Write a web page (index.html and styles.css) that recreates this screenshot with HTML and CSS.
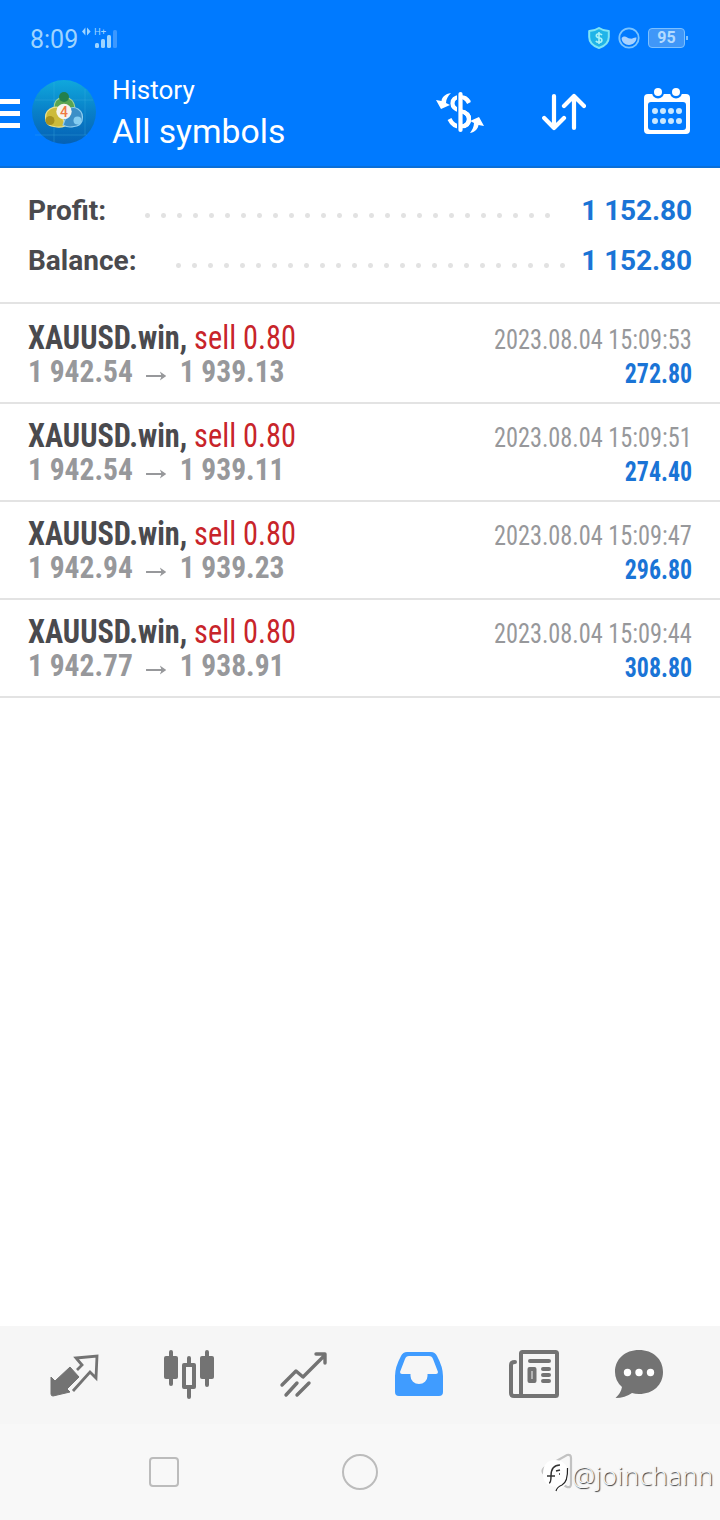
FILE: index.html
```html
<!DOCTYPE html>
<html lang="en">

<head>
    <meta charset="UTF-8">
    <meta name="viewport" content="width=device-width, initial-scale=1.0">
    <title>History</title>
    <link rel="stylesheet" href="styles.css">
</head>

<body>
    <div class="screen">
        <header class="header">
            <div class="status">
                <span class="clock">8:09</span>
                <svg class="signal" width="36" height="24" viewBox="0 0 36 24" fill="#9fd4ff">
                    <path d="M0 5.500L3.400 1.500V9.500zM8.600 5.500L5 1.500V9.500z"/>
                    <text x="12" y="9" font-size="9.500">H+</text>
                    <rect x="13" y="17" width="4" height="5" rx="1.500"/>
                    <rect x="19" y="13" width="4" height="9" rx="1.500"/>
                    <rect x="25" y="9" width="4" height="13" rx="1.500"/>
                    <rect x="31" y="4" width="4" height="18" rx="1.500" fill="#3c98ff"/>
                </svg>
                <div class="status-right">
                    <svg width="22" height="22" viewBox="0 0 22 22">
                        <path d="M11 1C8 3 5 4 1.200 4V10C1.200 15 5 19 11 21C17 19 20.800 15 20.800 10V4C17 4 14 3 11 1z" fill="#20b4e8" stroke="#7fe4f4" stroke-width="2" stroke-linejoin="round"/>
                        <path d="M14 8Q13 6.700 11 6.700Q8.300 6.700 8.300 8.700Q8.300 10.300 11 10.800Q13.900 11.300 13.900 13.200Q13.900 15.300 11 15.300Q8.700 15.300 7.900 13.800M11 5V17" fill="none" stroke="#a9f2f8" stroke-width="1.600"/>
                    </svg>
                    <svg width="22" height="22" viewBox="0 0 22 22">
                        <circle cx="11" cy="11" r="9.700" fill="none" stroke="#7ac4ff" stroke-width="1.800"/>
                        <path d="M3.600 11C7 7.500 9 11 12 11.600C15 12.200 16 10 18.500 10.600C18.500 15 15 18 11 18C7 18 3.600 15 3.600 11z" fill="#a8d2ff"/>
                    </svg>
                    <div class="battery">95</div>
                </div>
            </div>
            <div class="toolbar">
                <div class="menu"><i></i><i></i><i></i></div>
                <svg class="logo" width="64" height="64" viewBox="0 0 64 64">
                    <defs>
                        <linearGradient id="sky" x1="0" y1="0" x2="0" y2="1">
                            <stop offset="0" stop-color="#10a8dc"/>
                            <stop offset=".5" stop-color="#087fc8"/>
                            <stop offset="1" stop-color="#0561b4"/>
                        </linearGradient>
                    </defs>
                    <circle cx="32" cy="32" r="32" fill="url(#sky)"/>
                    <path d="M22 2V62M53 9V55M3 20H61M3 55H55" stroke="#43b6e4" stroke-opacity=".3"/>
                    <g stroke-width="1.200">
                        <path d="M22 28Q22 18 32 17Q42 18 43 28Q43 34 36 36H27Q22 34 22 28z" fill="#59a552" stroke="#a5d49a"/>
                        <path d="M14 41Q12 33 18 29Q23 26 28 28L33 46Q28 48 22 46.500Q16 46 14 41z" fill="#cdbb3b" stroke="#ebe08c"/>
                        <path d="M50 41Q52 33 46 29Q41 26 37 29L31 45Q36 48 42 46.500Q48 46 50 41z" fill="#3c8fc7" stroke="#8fcdef"/>
                    </g>
                    <circle cx="32" cy="17" r="5" fill="#23804c"/>
                    <circle cx="18" cy="40.500" r="4.500" fill="#a69120"/>
                    <circle cx="45.500" cy="40.500" r="4" fill="#85cdf1"/>
                    <circle cx="32" cy="31.500" r="7.700" fill="#f5f4ee"/>
                    <text x="32" y="36.500" text-anchor="middle" font-size="14" font-weight="500" fill="#ee7a42">4</text>
                </svg>
                <div class="titles">
                    <div class="title">History</div>
                    <div class="subtitle">All symbols</div>
                </div>
                <div class="actions">
                    <svg class="swap" width="50" height="44" viewBox="0 0 50 44" fill="none" stroke="#fff">
                        <path d="M33 12Q30 7 24.500 7Q16.500 7 16.500 13.500Q16.500 18.500 24.500 21Q33 23 33 29Q33 36.500 24.500 36.500Q17 36.500 13.500 29" stroke-width="4.200"/>
                        <path d="M24.500 1V43" stroke="#007aff" stroke-width="7"/>
                        <path d="M24.500 4V40" stroke-width="4.200" stroke-linecap="round"/>
                        <path d="M24.500 7Q30 7 33 13M24.500 21Q33 23 33 29Q33 36.500 24.500 36.500" stroke-width="4.200"/>
                        <path d="M15 3C9 4 6 7 5.500 11L0 10L5 19L14 15L10 13C10 9 12 6 15 3z" fill="#fff" stroke="none"/>
                        <path d="M34 43C40 42 42 38 42.500 35L48 36L43 27L34 31L38 33C38 37 36 40 34 43z" fill="#fff" stroke="none"/>
                    </svg>
                    <svg width="44" height="38" viewBox="0 0 44 38" fill="none" stroke="#fff" stroke-width="4.200" stroke-linecap="round" stroke-linejoin="round">
                        <path d="M12 3V35M2.200 25L12 35L22 25M32 35V3M22 13L32 3L42 13"/>
                    </svg>
                    <svg class="calendar" width="46" height="46" viewBox="0 0 46 46" fill="#fff">
                        <path fill-rule="evenodd" d="M4 6H42Q46 6 46 10V42Q46 46 42 46H4Q0 46 0 42V10Q0 6 4 6zM7 14Q4 14 4 17V39Q4 42 7 42H39Q42 42 42 39V17Q42 14 39 14z"/>
                        <circle cx="14" cy="4.500" r="6" fill="#007aff"/>
                        <circle cx="32" cy="4.500" r="6" fill="#007aff"/>
                        <circle cx="14" cy="4" r="4"/>
                        <circle cx="32" cy="4" r="4"/>
                        <path d="M11 23H11M19 23H19M27 23H27M35 23H35M11 33H11M19 33H19M27 33H27M35 33H35" stroke="#c9e8ff" stroke-width="6" stroke-linecap="round"/>
                    </svg>
                </div>
            </div>
        </header>

        <section class="summary">
            <div class="sum-row">
                <span class="label profit">Profit:</span>
                <span class="dots profit-dots"></span>
                <span class="total">1 152.80</span>
            </div>
            <div class="sum-row">
                <span class="label balance">Balance:</span>
                <span class="dots"></span>
                <span class="total">1 152.80</span>
            </div>
        </section>

        <main class="deals">
            <div class="deal">
                <div class="line"><span class="symbol"><b>XAUUSD.win,</b> <span class="sell">sell 0.80</span></span><span class="time">2023.08.04 15:09:53</span></div>
                <div class="line"><span class="price">1 942.54 <svg class="arrow" viewBox="0 0 22 12"><path d="M0 6H18"/><path d="M15 1.500L22 6L15 10.500L17 6z" class="tip"/></svg> 1 939.13</span><span class="amount">272.80</span></div>
            </div>
            <div class="deal">
                <div class="line"><span class="symbol"><b>XAUUSD.win,</b> <span class="sell">sell 0.80</span></span><span class="time">2023.08.04 15:09:51</span></div>
                <div class="line"><span class="price">1 942.54 <svg class="arrow" viewBox="0 0 22 12"><path d="M0 6H18"/><path d="M15 1.500L22 6L15 10.500L17 6z" class="tip"/></svg> 1 939.11</span><span class="amount">274.40</span></div>
            </div>
            <div class="deal">
                <div class="line"><span class="symbol"><b>XAUUSD.win,</b> <span class="sell">sell 0.80</span></span><span class="time">2023.08.04 15:09:47</span></div>
                <div class="line"><span class="price">1 942.94 <svg class="arrow" viewBox="0 0 22 12"><path d="M0 6H18"/><path d="M15 1.500L22 6L15 10.500L17 6z" class="tip"/></svg> 1 939.23</span><span class="amount">296.80</span></div>
            </div>
            <div class="deal">
                <div class="line"><span class="symbol"><b>XAUUSD.win,</b> <span class="sell">sell 0.80</span></span><span class="time">2023.08.04 15:09:44</span></div>
                <div class="line"><span class="price">1 942.77 <svg class="arrow" viewBox="0 0 22 12"><path d="M0 6H18"/><path d="M15 1.500L22 6L15 10.500L17 6z" class="tip"/></svg> 1 938.91</span><span class="amount">308.80</span></div>
            </div>
        </main>

        <nav class="tabs">
            <svg viewBox="0 0 50 50">
                <path d="M21 17L30 27L18 39L21 42L4 46Q2 46 2 44V27L6 31Z" fill="#737373" stroke="#737373" stroke-linejoin="round"/>
                <path d="M28 20L33 15L27 8L48 6L47 28L41 22L24 41" fill="none" stroke="#737373" stroke-width="2.800"/>
            </svg>
            <svg viewBox="0 0 50 50" fill="#737373">
                <rect x="0" y="6" width="14" height="23" rx="2"/>
                <rect x="36" y="6" width="14" height="23" rx="2"/>
                <path d="M7 2V34M43 2V35M25 8V15M25 38V47" stroke="#737373" stroke-width="4" stroke-linecap="round"/>
                <rect x="20" y="15" width="10" height="22" fill="none" stroke="#737373" stroke-width="4" stroke-linejoin="round"/>
            </svg>
            <svg viewBox="0 0 50 50" fill="none" stroke="#737373" stroke-width="3.400" stroke-linecap="round" stroke-linejoin="round">
                <path d="M3 35L17 21L24 27L45 6M37 4H46V13M7 45L18 33M18 45L30 33"/>
            </svg>
            <svg viewBox="0 0 50 50">
                <path fill="#409cff" fill-rule="evenodd" d="M13 2H37Q41 2 43 6Q49 17 49 26V42Q49 46 45 46H5Q1 46 1 42V26Q1 17 7 6Q9 2 13 2zM15 6Q12 6 11 9L6 22Q6 24 8 24H16.500V26A8.500 8 0 0 0 33.500 26V24H42Q44 24 44 22L39 9Q38 6 35 6z"/>
            </svg>
            <svg viewBox="0 0 50 50" fill="none" stroke="#737373" stroke-width="4" stroke-linecap="round" stroke-linejoin="round">
                <rect x="12" y="2" width="36" height="44" rx="1.500"/>
                <path d="M6 12Q2 12 2 15V43Q2 46 5 46H13M21 11H40M34 19H40M34 25H40M34 31H40"/>
                <rect x="20.500" y="19" width="5" height="12"/>
            </svg>
            <svg viewBox="0 0 50 50">
                <path d="M25 0C11 0 1 9 1 22Q1 31 8 37Q7 43 1.500 48Q11 48 18 43Q21 44 25 44C39 44 49 35 49 22S39 0 25 0z" fill="#737373"/>
                <path d="M13.500 22.500H13.500M25 22.500H25M36.500 22.500H36.500" stroke="#fff" stroke-width="7.400" stroke-linecap="round"/>
            </svg>
        </nav>

        <footer class="navbar">
            <span class="recent"></span>
            <span class="home"></span>
            <svg class="back" width="34" height="38" viewBox="0 0 34 38"><path d="M3 15L26 2Q30 1 30 5V31Q30 35 26 34L3 21Q0 18 3 15z" fill="none" stroke="#c2c2c2" stroke-width="2.200"/></svg>
        </footer>

        <div class="watermark">
            <svg width="30" height="38" viewBox="0 0 30 38">
                <path d="M14 31L13 36L20 32Q26 28 26 18C26 9 21 4 13 4S1 9 1 18S6 30 14 31z" fill="#fff"/>
                <path d="M14 35Q15 31 20 29Q26 26 25.500 12" fill="none" stroke="#222" stroke-width="1.200"/>
                <path d="M7 27Q9 27 9 20H5M9 20Q9 9 18 9M9 20H13M14 15L18 14M17 18H18" fill="none" stroke="#333" stroke-width="1.500"/>
            </svg>
            <span>@joinchann</span>
        </div>
    </div>
</body>

</html>
```
FILE: styles.css
```css
* {
    box-sizing: border-box;
}

body,
html {
    margin: 0;
    padding: 0;
    font-family: Roboto, sans-serif;
}

svg {
    display: block;
    flex: none;
}

.screen {
    position: relative;
    display: flex;
    flex-direction: column;
    width: 720px;
    height: 1520px;
    background: white;
    overflow: hidden;
}

/* header */
.header {
    height: 168px;
    background: #007aff;
    border-bottom: 2px solid #0a6fd8;
    color: white;
}

.status {
    display: flex;
    align-items: center;
    height: 76px;
    padding: 0 31px 0 30px;
}

.clock {
    font-size: 25px;
    color: #9fd4ff;
    width: 52px;
    line-height: 30px;
    padding-top: 3px;
}

.status-right {
    display: flex;
    align-items: center;
    gap: 8px;
    margin-left: auto;
}

.battery {
    position: relative;
    width: 37px;
    height: 20px;
    margin: 0 4px 0 0;
    border: 1.5px solid #7cc0ff;
    border-radius: 4px;
    background: #4097f8;
    color: #b4dbff;
    font-size: 16px;
    font-weight: bold;
    line-height: 18px;
    text-align: center;
}

.battery::after {
    content: "";
    position: absolute;
    right: -4px;
    top: 7px;
    width: 2px;
    height: 4px;
    background: #7cc0ff;
}

.toolbar {
    display: flex;
    height: 90px;
}

.menu {
    display: flex;
    flex-direction: column;
    gap: 7px;
    width: 20px;
    padding-top: 23px;
}

.menu i {
    height: 5px;
    background: white;
}

.logo {
    margin: 4px 0 0 12px;
}

.titles {
    margin-left: 16px;
}

.title {
    font-size: 26px;
    line-height: 28px;
}

.subtitle {
    font-size: 33.7px;
    line-height: 40px;
    margin-top: 8px;
}

.actions {
    display: flex;
    align-items: center;
    gap: 58px;
    height: 72px;
    margin-left: auto;
    padding-right: 30px;
}

.swap {
    margin-right: -2px;
}

.calendar {
    margin-bottom: 2px;
}

/* totals */
.summary {
    height: 136px;
    padding: 18px 28px 0;
    border-bottom: 2px solid #e3e3e3;
}

.sum-row {
    display: flex;
    height: 50px;
    line-height: 50px;
    font-size: 28px;
    font-weight: bold;
}

.label {
    width: 148px;
    color: #4a4a4e;
}

.profit {
    width: 117px;
}

.dots {
    width: 392px;
    height: 5px;
    margin-top: 27px;
    background: radial-gradient(circle at 2.5px 2.5px, #e2e2e2 2px, transparent 3px) 0 0 / 16px 5px;
}

.profit-dots {
    width: 408px;
}

.total {
    margin-left: auto;
    color: #1a74d6;
    letter-spacing: -.1px;
}

/* deals */
.deals {
    flex: 1;
    padding-top: 2px;
    font-stretch: 75%;
}

.deal {
    height: 98px;
    padding: 14px 28px 0;
    border-bottom: 2px solid #e3e3e3;
}

.line {
    display: flex;
    justify-content: space-between;
    height: 34px;
    line-height: 34px;
    white-space: nowrap;
}

.symbol {
    font-size: 33px;
    line-height: 36px;
    color: #4a4a4e;
    transform: scaleX(.919);
    transform-origin: left;
}

.sell {
    color: #c8242a;
    font-weight: 450;
}

.price {
    font-size: 32px;
    font-weight: bold;
    color: #97989b;
    transform: scaleX(.922);
    transform-origin: left;
}

.arrow {
    display: inline-block;
    width: 22px;
    height: 12px;
    margin: 0 7px;
    fill: none;
    stroke: #97989b;
    stroke-width: 2;
}

.tip {
    fill: #97989b;
    stroke: none;
}

.time {
    font-size: 27px;
    font-weight: 450;
    line-height: 41px;
    color: #97989b;
    transform: scaleX(.9);
    transform-origin: right;
}

.amount {
    font-size: 27px;
    line-height: 41px;
    font-weight: bold;
    color: #1a74d6;
    transform: scaleX(.885);
    transform-origin: right;
}

/* bottom bars */
.tabs {
    display: grid;
    grid-template-columns: repeat(5, 115px) 95px;
    justify-items: center;
    height: 98px;
    padding: 24px 34px 0 16px;
    background: #f6f6f6;
}

.tabs svg {
    width: 50px;
    height: 50px;
}

.navbar {
    display: flex;
    align-items: center;
    height: 96px;
    padding-left: 149px;
    background: #f8f8f8;
}

.recent {
    width: 30px;
    height: 30px;
    border: 2px solid #bcbcbc;
    border-radius: 4px;
}

.home {
    width: 36px;
    height: 36px;
    margin-left: 163px;
    border: 2px solid #bcbcbc;
    border-radius: 50%;
}

.back {
    margin-left: 163px;
}

.watermark {
    position: absolute;
    left: 542px;
    top: 1456px;
    display: flex;
    align-items: center;
    color: #f8f8f8;
    font-family: "Open Sans", sans-serif;
    font-size: 26px;
    font-weight: 300;
    letter-spacing: .4px;
    line-height: 38px;
    text-shadow: 1px 1px 1px #333;
}
```
